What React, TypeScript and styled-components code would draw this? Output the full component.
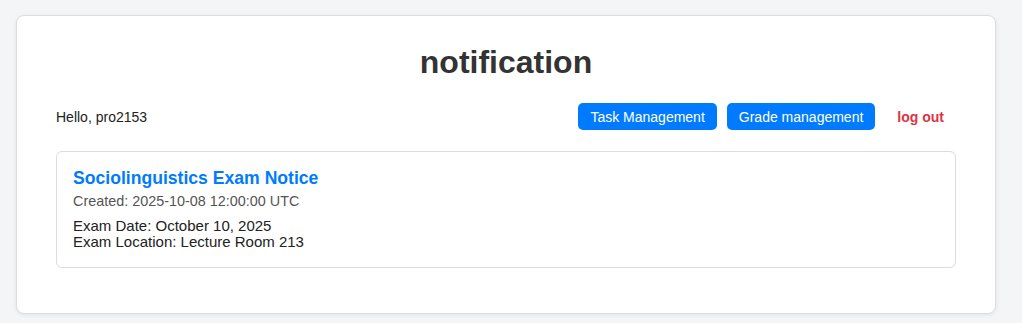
import React from "react";
import styled, { createGlobalStyle } from "styled-components";

const GlobalStyle = createGlobalStyle`
  html, body {
    margin: 0;
    padding: 0;
    background: #f4f5f7;
    font-family: "Liberation Sans", Arial, sans-serif;
    color: #333;
  }
`;

const Page = styled.div`
  padding: 15px 16px;
  min-height: 323px;
  box-sizing: border-box;
`;

const Card = styled.div`
  width: 980px;
  box-sizing: border-box;
  background: #fff;
  border: 1px solid #dcdde0;
  border-radius: 8px;
  box-shadow: 0 1px 4px rgba(0, 0, 0, 0.08);
  padding: 28px 39px 45px;
`;

const Title = styled.h1`
  margin: 0 0 22px;
  text-align: center;
  font-size: 32px;
  font-weight: 700;
  color: #333;
`;

const Header = styled.div`
  display: flex;
  align-items: center;
  justify-content: space-between;
  height: 27px;
  margin-bottom: 21px;
`;

const Greeting = styled.span`
  font-size: 14px;
  color: #222;
`;

const Actions = styled.div`
  display: flex;
  align-items: center;
  gap: 10px;
`;

const NavButton = styled.button<{ $variant?: "primary" | "link" }>`
  height: 27px;
  padding: 0 12px;
  border: none;
  border-radius: 5px;
  font-family: inherit;
  font-size: 14px;
  cursor: pointer;
  background: ${(p) => (p.$variant === "link" ? "transparent" : "#007bff")};
  color: ${(p) => (p.$variant === "link" ? "#dc3545" : "#fff")};
  font-weight: ${(p) => (p.$variant === "link" ? 700 : 400)};
`;

const Notice = styled.div`
  border: 1px solid #dcdcdc;
  border-radius: 6px;
  padding: 16px;
`;

const NoticeTitle = styled.h3`
  margin: 0 0 4px;
  font-size: 17.6px;
  font-weight: 700;
  color: #007bff;
`;

const NoticeMeta = styled.div`
  font-size: 14.4px;
  line-height: 16.5px;
  color: #555;
  margin-bottom: 8px;
`;

const NoticeBody = styled.div`
  font-size: 15px;
  line-height: 16.5px;
  color: #222;
`;

export default function App() {
  return (
    <>
      <GlobalStyle />
      <Page>
        <Card>
          <Title>notification</Title>
          <Header>
            <Greeting>Hello, pro2153</Greeting>
            <Actions>
              <NavButton>Task Management</NavButton>
              <NavButton>Grade management</NavButton>
              <NavButton $variant="link">log out</NavButton>
            </Actions>
          </Header>
          <Notice>
            <NoticeTitle>Sociolinguistics Exam Notice</NoticeTitle>
            <NoticeMeta>Created: 2025-10-08 12:00:00 UTC</NoticeMeta>
            <NoticeBody>
              Exam Date: October 10, 2025
              <br />
              Exam Location: Lecture Room 213
            </NoticeBody>
          </Notice>
        </Card>
      </Page>
    </>
  );
}
